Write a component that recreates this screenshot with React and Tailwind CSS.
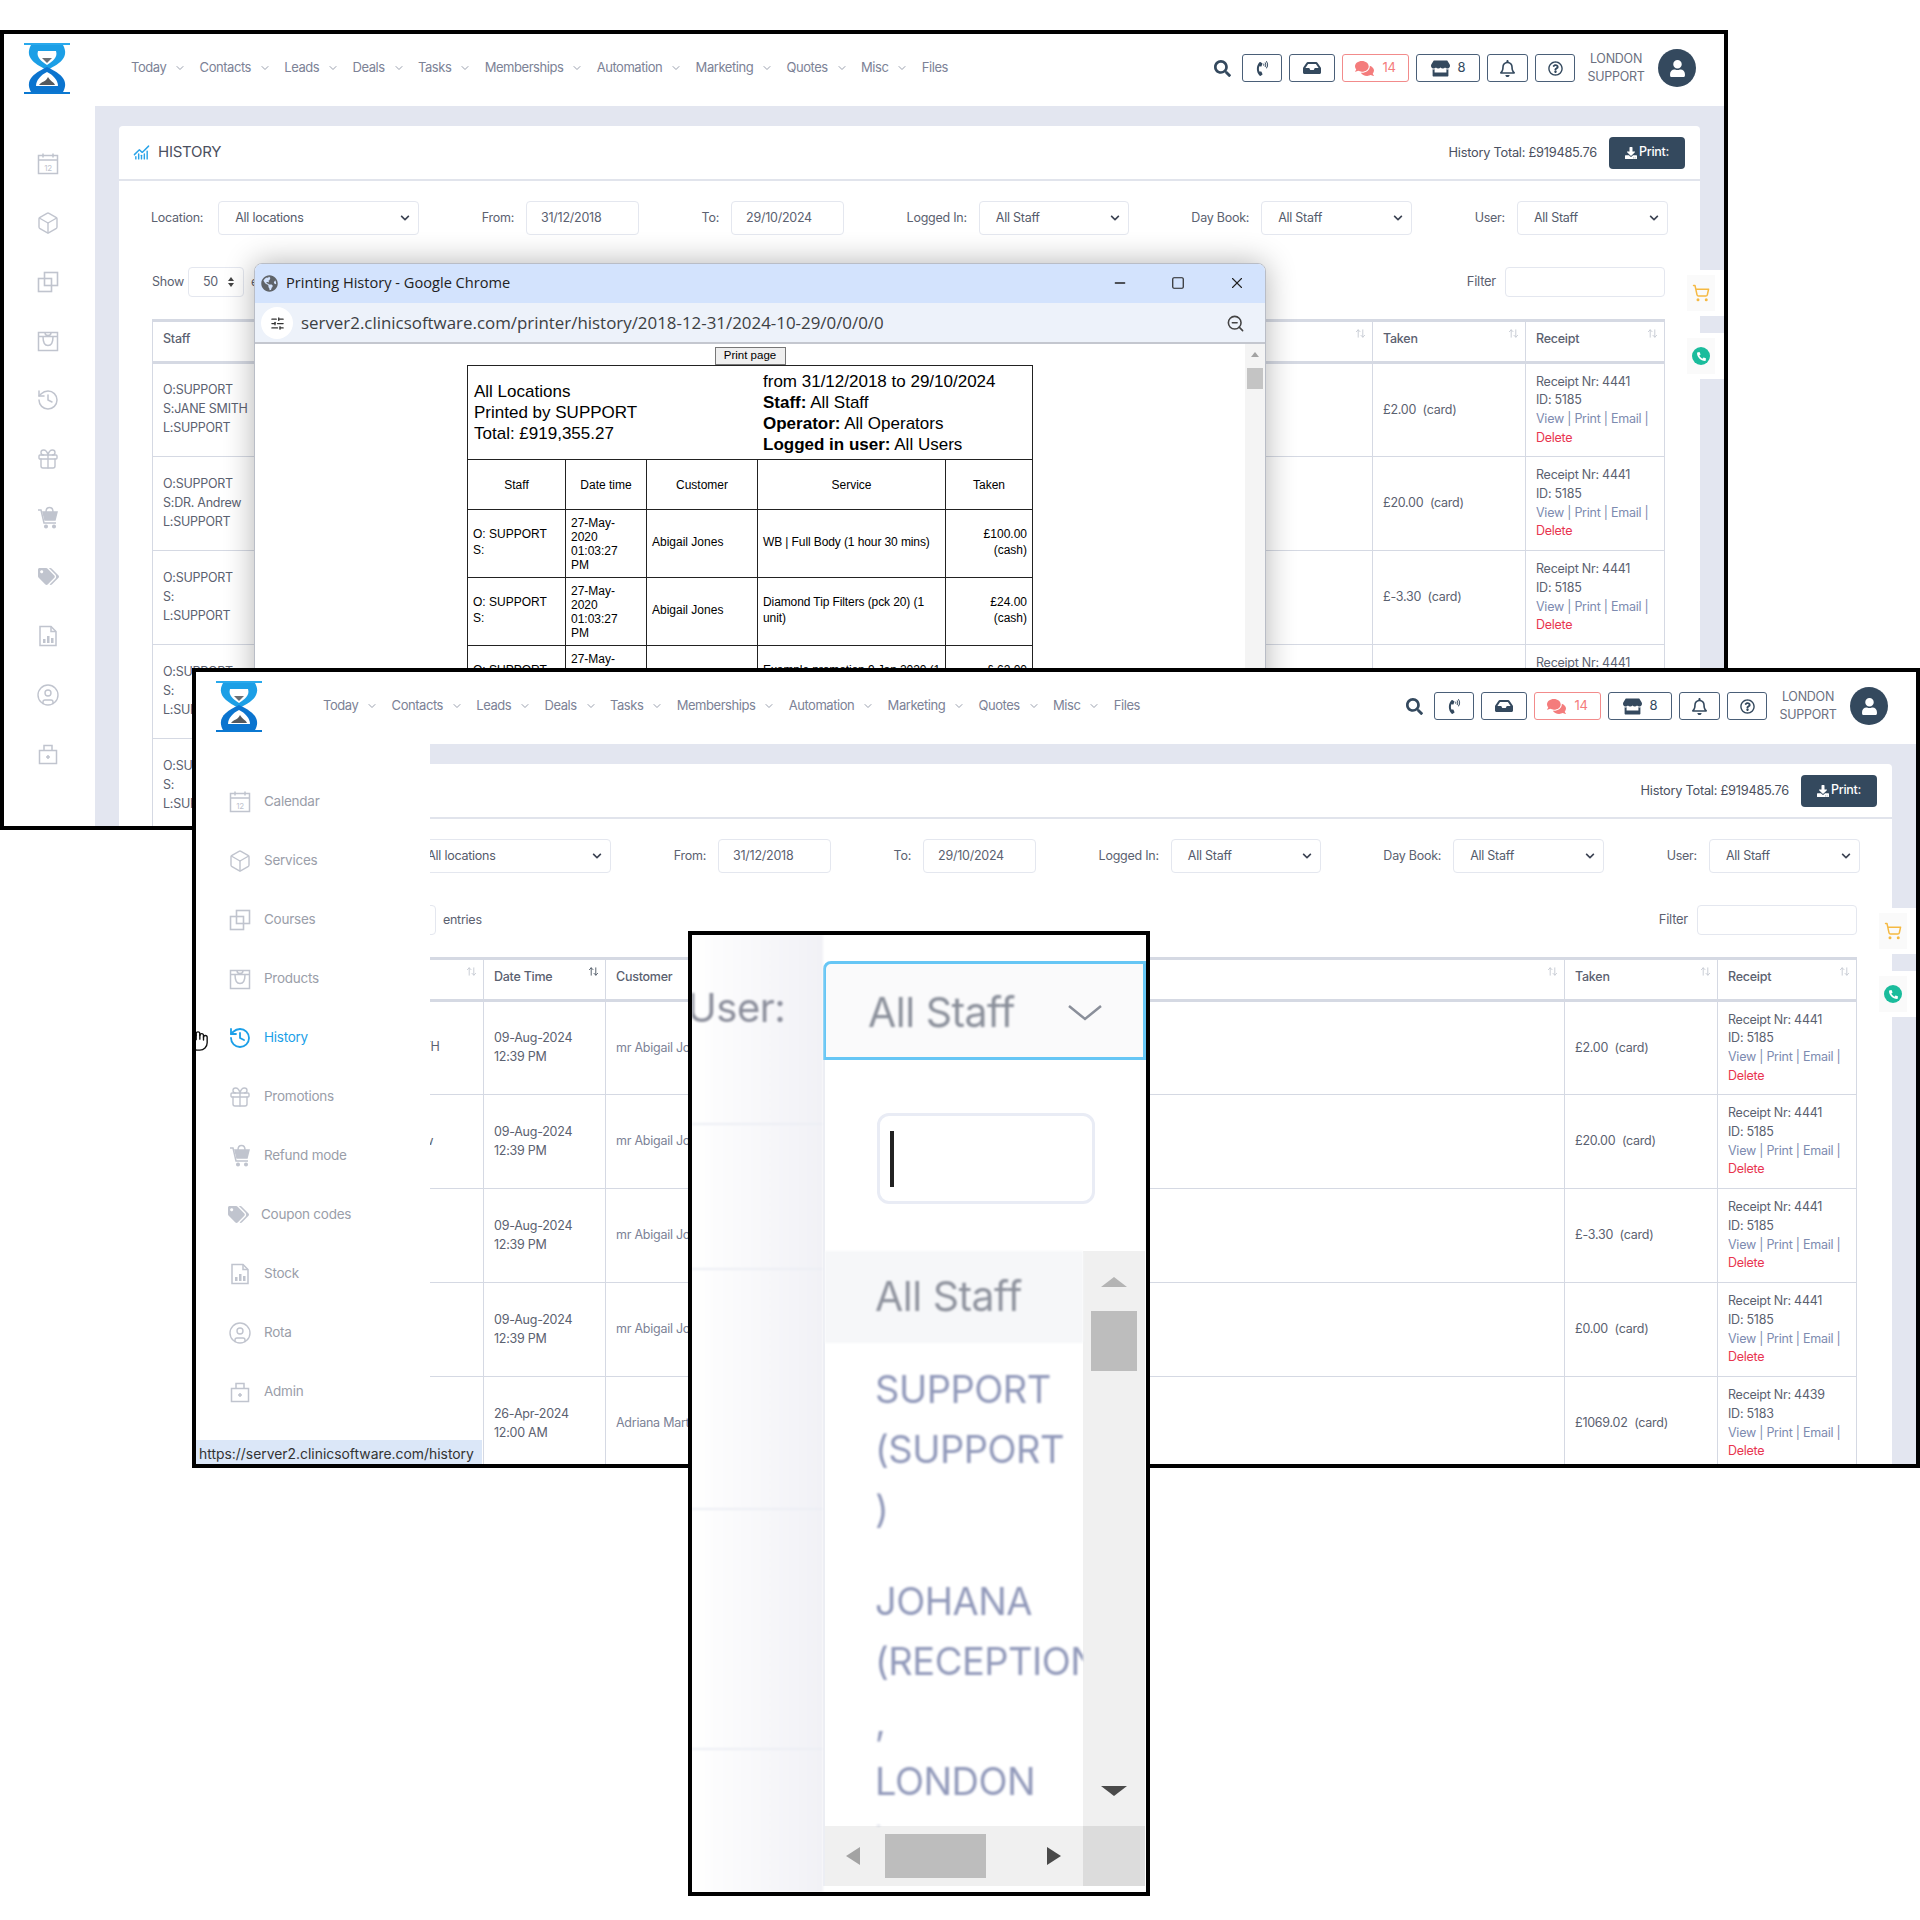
import React from "react";
import {
  Box,
  History,
  Gift,
  ChevronDown,
  ArrowUpDown,
  Minus,
  Square,
  X,
  ZoomOut,
  SlidersHorizontal,
  Hand,
  ShoppingCart,
  CircleUser,
  ChartNoAxesCombined,
} from "lucide-react";
import {
  FaSearch,
  FaPhoneVolume,
  FaInbox,
  FaComments,
  FaStore,
  FaRegBell,
  FaRegQuestionCircle,
  FaUser,
  FaDownload,
  FaChevronDown,
  FaTags,
  FaGlobeAmericas,
  FaPhone,
} from "react-icons/fa";

const nav = [
  "Today",
  "Contacts",
  "Leads",
  "Deals",
  "Tasks",
  "Memberships",
  "Automation",
  "Marketing",
  "Quotes",
  "Misc",
];

const rows = [
  { staff: "JANE SMITH", date: "09-Aug-2024", time: "12:39 PM", customer: "mr Abigail Jones", taken: "£2.00", nr: "4441", id: "5185" },
  { staff: "DR. Andrew", date: "09-Aug-2024", time: "12:39 PM", customer: "mr Abigail Jones", taken: "£20.00", nr: "4441", id: "5185" },
  { staff: "", date: "09-Aug-2024", time: "12:39 PM", customer: "mr Abigail Jones", taken: "£-3.30", nr: "4441", id: "5185" },
  { staff: "", date: "09-Aug-2024", time: "12:39 PM", customer: "mr Abigail Jones", taken: "£0.00", nr: "4441", id: "5185" },
  { staff: "", date: "26-Apr-2024", time: "12:00 AM", customer: "Adriana Martin", taken: "£1069.02", nr: "4439", id: "5183" },
];

function Logo() {
  return (
    <svg width="46" height="51" viewBox="0 0 46 51" className="shrink-0">
      <path d="M7 2 C1 13 8 20 23 27 C38 20 45 13 39 2 Z" fill="#1c9fe6" />
      <path d="M23 24 C8 31 1 38 7 49 H39 C45 38 38 31 23 24 Z" fill="#0b74cf" />
      <path d="M14 8 H32 C34 14 29 18 23 22 C17 18 12 14 14 8 Z" fill="#fff" />
      <path d="M23 29 C17 32 12 37 12 43 H34 C34 37 29 32 23 29 Z" fill="#fff" />
      <path d="M15 42 C18 38 22 39 24 34 C26 38 30 39 31 42 Z" fill="#55595e" />
      <path d="M18 15 H28 L23 20 Z" fill="#6b6f74" />
      <rect x="0" y="0" width="46" height="2" fill="#29a9ec" />
      <rect x="0" y="49" width="46" height="2" fill="#0b78d1" />
    </svg>
  );
}

function CalendarIcon() {
  return (
    <svg width="24" height="24" viewBox="0 0 24 24" fill="none" stroke="#c0c4ce" strokeWidth="1.5">
      <rect x="2.5" y="3.5" width="19" height="18" />
      <path d="M2.5 8h19M7 1.5v4M17 1.5v4" />
      <text x="12" y="18.5" textAnchor="middle" fontSize="8" stroke="none" fill="#c0c4ce" fontFamily="Inter, sans-serif">12</text>
    </svg>
  );
}

function CoursesIcon() {
  return (
    <svg width="24" height="24" viewBox="0 0 24 24" fill="none" stroke="#c0c4ce" strokeWidth="1.6">
      <rect x="2.5" y="8.5" width="13" height="13" />
      <rect x="8.5" y="2.5" width="13" height="13" />
    </svg>
  );
}

function ProductsIcon() {
  return (
    <svg width="24" height="24" viewBox="0 0 24 24" fill="none" stroke="#c0c4ce" strokeWidth="1.5">
      <rect x="2.5" y="3.5" width="19" height="18" />
      <path d="M2.5 7.5h19M7 7.5c0 6 2 9 5 9s5-3 5-9M9 3.5c0 2 1.5 3 3 3s3-1 3-3" />
    </svg>
  );
}

function RefundIcon() {
  return (
    <svg width="24" height="24" viewBox="0 0 24 24" fill="none" stroke="#c0c4ce" strokeWidth="1.5">
      <path d="M2 4h3l3 13h12" />
      <path d="M7 6h14l-2 8H9z" fill="#c0c4ce" />
      <circle cx="10" cy="20.5" r="1.3" fill="#c0c4ce" />
      <circle cx="18" cy="20.5" r="1.3" fill="#c0c4ce" />
      <path d="M10 6c0-6 7-6 7 0" />
    </svg>
  );
}

function StockIcon() {
  return (
    <svg width="24" height="24" viewBox="0 0 24 24" fill="none" stroke="#c0c4ce" strokeWidth="1.5">
      <path d="M4 2.5h11l5 5v14H4z" />
      <path d="M15 2.5v5h5" />
      <path d="M7 19v-4h2.5v4zM11 19v-7h2.5v7zM15 19v-5h2.5v5z" fill="#c0c4ce" stroke="none" />
    </svg>
  );
}

function AdminIcon() {
  return (
    <svg width="24" height="24" viewBox="0 0 24 24" fill="none" stroke="#c0c4ce" strokeWidth="1.5">
      <rect x="3.5" y="8.5" width="17" height="13" />
      <path d="M8 8.5V3.5h8v5M12 13v4M10 15h4" />
    </svg>
  );
}

const side = [
  { label: "Calendar", icon: <CalendarIcon /> },
  { label: "Services", icon: <Box size={24} strokeWidth={1.4} color="#c0c4ce" /> },
  { label: "Courses", icon: <CoursesIcon /> },
  { label: "Products", icon: <ProductsIcon /> },
  { label: "History", icon: <History size={24} strokeWidth={1.5} color="#c0c4ce" /> },
  { label: "Promotions", icon: <Gift size={24} strokeWidth={1.4} color="#c0c4ce" /> },
  { label: "Refund mode", icon: <RefundIcon /> },
  { label: "Coupon codes", icon: <FaTags size={21} color="#c0c4ce" /> },
  { label: "Stock", icon: <StockIcon /> },
  { label: "Rota", icon: <CircleUser size={24} strokeWidth={1.4} color="#c0c4ce" /> },
  { label: "Admin", icon: <AdminIcon /> },
];

function Sel({ text, width }) {
  return (
    <div className={`flex h-[34px] items-center justify-between rounded border border-[#e4e7ef] pl-4 pr-2 text-[#555b6b] ${width}`}>
      <span>{text}</span>
      <FaChevronDown size={10} color="#3b4252" />
    </div>
  );
}

function Box2({ children, width, red }) {
  return (
    <div
      className={`flex h-[28px] items-center justify-center gap-2 rounded-[3px] border-[1.5px] ${
        red ? "border-[#f28b8b] text-[#f47c7c]" : "border-[#4a5f78] text-[#34495e]"
      } ${width}`}
    >
      {children}
    </div>
  );
}

function Th({ children, dark }) {
  return (
    <th className="border-x border-[#d5d9e3] px-[10px] pt-[6px] text-left align-top font-medium">
      <div className="flex items-start justify-between">
        <span className="mt-[2px]">{children}</span>
        <ArrowUpDown size={11} color={dark ? "#4b5563" : "#c5c9d2"} className="-mr-1" />
      </div>
    </th>
  );
}

function AppWindow({ position, expanded, children }) {
  return (
    <div className={`absolute h-[800px] w-[1728px] overflow-hidden border-4 border-black bg-white font-['Inter',sans-serif] text-[12.5px] tracking-[-0.25px] text-[#5b6170] ${position}`}>
      {/* Header */}
      <div className="flex h-[72px] items-center pb-[4px] pl-[20px] pr-[28px]">
        <Logo />
        <nav className="ml-[61px] flex items-center gap-[13.3px] text-[13px] tracking-[-0.45px] text-[#7c8296]">
          {nav.map((n) => (
            <div key={n} className="flex items-center gap-[8px]">
              <span>{n}</span>
              <ChevronDown size={12} color="#9aa0ae" />
            </div>
          ))}
          <span>Files</span>
        </nav>
        <div className="ml-auto flex items-center gap-[7px]">
          <FaSearch size={17} color="#34495e" className="mr-[4px]" />
          <Box2 width="w-[40px]"><FaPhoneVolume size={15} /></Box2>
          <Box2 width="w-[46px]"><FaInbox size={18} /></Box2>
          <Box2 width="w-[67px]" red><FaComments size={19} /><span className="text-[13px]">14</span></Box2>
          <Box2 width="w-[64px]"><FaStore size={19} /><span className="text-[13px]">8</span></Box2>
          <Box2 width="w-[41px]"><FaRegBell size={17} /></Box2>
          <Box2 width="w-[40px]"><FaRegQuestionCircle size={15} /></Box2>
          <div className="ml-[3px] w-[62px] whitespace-nowrap text-center text-[12.5px] leading-[18.5px] text-[#6b7080]">
            <div>LONDON</div>
            <div>SUPPORT</div>
          </div>
          <div className="ml-[4px] flex h-[38px] w-[38px] items-center justify-center rounded-full bg-[#34495e]">
            <FaUser size={17} color="#fff" />
          </div>
        </div>
      </div>

      <div className="relative flex h-[720px]">
        {/* Collapsed sidebar */}
        <div className="flex w-[91px] shrink-0 flex-col pr-[3px] pt-[28px]">
          {side.map((s) => (
            <div key={s.label} className="flex h-[59px] items-center justify-center">{s.icon}</div>
          ))}
        </div>

        {/* Main */}
        <div className="min-w-0 flex-1 bg-[#e3e6f0] py-[20px] pl-[24px] pr-[24px]">
          <div className="h-[800px] rounded-sm bg-white">
            <div className="flex h-[55px] items-center justify-between border-b-2 border-[#e1e4ec] pl-[14px] pr-[15px]">
              <div className="flex items-center gap-[8px] text-[15px] text-[#4b5060]">
                <ChartNoAxesCombined size={17} color="#29a3e8" />
                <span>HISTORY</span>
              </div>
              <div className="flex items-center gap-[12px]">
                <span className="text-[12.8px] text-[#4b5060]">History Total: £919485.76</span>
                <div className="flex h-[32px] w-[76px] items-center justify-center gap-[2px] rounded-sm bg-[#34495e] font-medium text-white">
                  <FaDownload size={12} />
                  <span>Print:</span>
                </div>
              </div>
            </div>

            {/* Filters */}
            <div className="flex items-center justify-between px-[32px] pt-[20px]">
              <div className="flex items-center gap-[15px]"><span>Location:</span><Sel text="All locations" width="w-[201px]" /></div>
              <div className="flex items-center gap-[12px]"><span>From:</span><div className="flex h-[34px] w-[113px] items-center rounded border border-[#e4e7ef] pl-[14px]">31/12/2018</div></div>
              <div className="flex items-center gap-[12px]"><span>To:</span><div className="flex h-[34px] w-[113px] items-center rounded border border-[#e4e7ef] pl-[14px]">29/10/2024</div></div>
              <div className="flex items-center gap-[12px]"><span>Logged In:</span><Sel text="All Staff" width="w-[150px]" /></div>
              <div className="flex items-center gap-[12px]"><span>Day Book:</span><Sel text="All Staff" width="w-[151px]" /></div>
              <div className="flex items-center gap-[12px]"><span>User:</span><Sel text="All Staff" width="w-[151px]" /></div>
            </div>

            <div className="flex items-center justify-between pl-[33px] pr-[35px] pt-[32px]">
              <div className="flex items-center gap-[4px]">
                <span>Show</span>
                <div className="flex h-[30px] w-[56px] items-center justify-between rounded border border-[#e4e7ef] pl-[14px] pr-[9px]">
                  <span>50</span>
                  <div className="flex flex-col gap-[2px]">
                    <div className="h-0 w-0 border-x-[3px] border-b-[4px] border-x-transparent border-b-[#444]" />
                    <div className="h-0 w-0 border-x-[3px] border-t-[4px] border-x-transparent border-t-[#444]" />
                  </div>
                </div>
                <span className="ml-[3px]">entries</span>
              </div>
              <div className="flex items-center gap-[9px]">
                <span className="text-[13px]">Filter</span>
                <div className="h-[30px] w-[160px] rounded-sm border border-[#e4e7ef]" />
              </div>
            </div>

            {/* Table */}
            <div className="pl-[33px] pr-[35px] pt-[22px]">
              <table className="w-full table-fixed border-collapse">
                <colgroup>
                  <col className="w-[139px]" />
                  <col className="w-[122px]" />
                  <col className="w-[270px]" />
                  <col />
                  <col className="w-[153px]" />
                  <col className="w-[139px]" />
                </colgroup>
                <thead>
                  <tr className="h-[42px] border-y-[3px] border-[#d5d9e3]">
                    <Th>Staff</Th>
                    <Th dark>Date Time</Th>
                    <Th>Customer</Th>
                    <Th></Th>
                    <Th>Taken</Th>
                    <Th>Receipt</Th>
                  </tr>
                </thead>
                <tbody>
                  {rows.map((r, i) => (
                    <tr key={i} className="h-[94px] border-b border-[#d5d9e3]">
                      <td className="border-x border-[#d5d9e3] px-[10px] pb-[3px] leading-[19px]">
                        <div>O:SUPPORT</div>
                        <div className="whitespace-nowrap">S:{r.staff}</div>
                        <div>L:SUPPORT</div>
                      </td>
                      <td className="border-x border-[#d5d9e3] px-[10px] pb-[2px] leading-[19px]">
                        <div>{r.date}</div>
                        <div>{r.time}</div>
                      </td>
                      <td className="border-x border-[#d5d9e3] px-[10px] text-[#7c8296]">{r.customer}</td>
                      <td className="border-x border-[#d5d9e3]"></td>
                      <td className="border-x border-[#d5d9e3] px-[10px]">{r.taken}&nbsp; (card)</td>
                      <td className="border-x border-[#d5d9e3] px-[10px] leading-[18.7px]">
                        <div>Receipt Nr: {r.nr}</div>
                        <div>ID: {r.id}</div>
                        <div className="whitespace-nowrap text-[#7d8bb0]">View | Print | Email |</div>
                        <div className="text-[#e8354f]">Delete</div>
                      </td>
                    </tr>
                  ))}
                </tbody>
              </table>
            </div>
          </div>
        </div>

        {/* Floating side widgets */}
        <div className="absolute right-0 top-[164px] flex flex-col gap-[17px]">
          <div className="flex h-[46px] w-[43px] items-center justify-center rounded-l bg-white pr-[3px]">
            <div className="flex h-[36px] w-[28px] items-center justify-center bg-[#fafafa]">
              <ShoppingCart size={18} color="#f5b942" />
            </div>
          </div>
          <div className="flex h-[46px] w-[43px] items-center justify-center rounded-l bg-white pr-[3px]">
            <div className="flex h-[36px] w-[28px] items-center justify-center bg-[#fafafa]">
              <span className="flex h-[18px] w-[18px] items-center justify-center rounded-full bg-[#1abc9c]">
                <FaPhone size={9} color="#fff" className="rotate-90" />
              </span>
            </div>
          </div>
        </div>

        {expanded && (
          <>
            <div className="absolute bottom-0 left-0 top-0 w-[234px] bg-white pt-[28px]">
              {side.map((s) => (
                <div key={s.label} className="flex h-[59px] items-center pl-[32px]">
                  {s.label === "History" ? <History size={24} strokeWidth={1.8} color="#1b9fe8" /> : s.icon}
                  <span className={`ml-[12px] text-[13.5px] ${s.label === "History" ? "text-[#1b9fe8]" : "text-[#9a9ea9]"}`}>{s.label}</span>
                </div>
              ))}
            </div>
            <Hand size={22} strokeWidth={1.5} color="#111" className="absolute -left-[9px] top-[286px]" />
            <div className="absolute bottom-0 left-0 flex h-[24px] w-[286px] items-center bg-[#dbe7f8] pl-[3px] pt-[5px] text-[13.9px] tracking-normal text-[#333]">
              https://server2.clinicsoftware.com/history
            </div>
          </>
        )}
      </div>
      {children}
    </div>
  );
}

function PrintPopup() {
  const cell = "border border-[#222] px-[5px] pb-[3px]";
  return (
    <div className="absolute left-[250px] top-[229px] h-[700px] w-[1012px] overflow-hidden rounded-t-lg border border-[#b9bdc6] bg-white font-['Open_Sans',sans-serif] tracking-normal shadow-[0_0_30px_rgba(0,0,0,0.3)]">
      <div className="flex h-[39px] items-center bg-[#d3e3fd] pb-[1px] pl-[6px] pr-[19px] text-[14.6px] text-[#222]">
        <FaGlobeAmericas size={17} color="#5f6368" />
        <span className="ml-[8px]">Printing History - Google Chrome</span>
        <div className="ml-auto flex items-center gap-[43px]">
          <Minus size={16} />
          <Square size={14} />
          <X size={18} strokeWidth={1.5} />
        </div>
      </div>
      <div className="flex h-[41px] items-center border-b-2 border-[#c4c7cf] bg-[#edf2fa] pl-[6px] pr-[20px] pt-[1px] text-[16.9px] text-[#3c4043]">
        <div className="flex h-[32px] w-[32px] items-center justify-center rounded-full bg-white">
          <SlidersHorizontal size={15} color="#333" />
        </div>
        <span className="ml-[8px] whitespace-nowrap">server2.clinicsoftware.com/printer/history/2018-12-31/2024-10-29/0/0/0/0</span>
        <ZoomOut size={19} color="#444" className="ml-auto" />
      </div>
      <div className="flex h-[620px]">
        <div className="flex min-w-0 flex-1 flex-col items-center pt-[3px] font-['Liberation_Sans',Arial,sans-serif] text-[12px] text-black">
          <div className="flex h-[18px] w-[71px] items-center justify-center border border-[#777] bg-[#efefef] text-[11.5px]">Print page</div>
          <table className="w-[565px] table-fixed border-collapse">
            <colgroup>
              <col className="w-[98px]" />
              <col className="w-[81px]" />
              <col className="w-[111px]" />
              <col className="w-[188px]" />
              <col className="w-[87px]" />
            </colgroup>
            <tbody>
              <tr className="h-[94px]">
                <td colSpan={5} className="border border-[#222]">
                  <div className="flex items-center text-[17px] leading-[21px]">
                    <div className="w-[295px] pl-[6px]">
                      <div>All Locations</div>
                      <div>Printed by SUPPORT</div>
                      <div>Total: £919,355.27</div>
                    </div>
                    <div className="whitespace-nowrap">
                      <div>from 31/12/2018 to 29/10/2024</div>
                      <div><b>Staff:</b> All Staff</div>
                      <div><b>Operator:</b> All Operators</div>
                      <div><b>Logged in user:</b> All Users</div>
                    </div>
                  </div>
                </td>
              </tr>
              <tr className="h-[50px] text-center">
                <td className="border border-[#222] px-[5px]">Staff</td>
                <td className="border border-[#222] px-[5px]">Date time</td>
                <td className="border border-[#222] px-[5px]">Customer</td>
                <td className="border border-[#222] px-[5px]">Service</td>
                <td className="border border-[#222] px-[5px]">Taken</td>
              </tr>
              {[
                ["Abigail Jones", "WB | Full Body (1 hour 30 mins)", "£100.00"],
                ["Abigail Jones", "Diamond Tip Filters (pck 20) (1 unit)", "£24.00"],
                ["", "Example promotion 9 Jan 2020 (1 unit)", "£ 62.00"],
              ].map((r, i) => (
                <tr key={i} className="h-[68px] leading-[16px]">
                  <td className={cell}>O: SUPPORT<br />S:</td>
                  <td className="border border-[#222] px-[5px] leading-[14px]">27-May-<br />2020<br />01:03:27<br />PM</td>
                  <td className={cell}>{r[0]}</td>
                  <td className={`${cell} tracking-[-0.1px]`}>{r[1]}</td>
                  <td className={`${cell} text-right`}>{r[2]}<br />(cash)</td>
                </tr>
              ))}
            </tbody>
          </table>
        </div>
        <div className="flex w-[20px] flex-col items-center bg-[#f4f4f4] pt-[8px]">
          <div className="h-0 w-0 border-x-[4px] border-b-[5px] border-x-transparent border-b-[#a3a3a3]" />
          <div className="mt-[11px] h-[21px] w-[16px] bg-[#c4c4c4]" />
        </div>
      </div>
    </div>
  );
}

function ZoomPanel() {
  const line = "leading-[60px]";
  return (
    <div className="absolute left-[688px] top-[931px] flex h-[965px] w-[462px] overflow-hidden border-4 border-black bg-white font-['Inter',sans-serif] tracking-[-0.5px]">
      <div className="w-[131px] shrink-0 bg-gradient-to-r from-white to-[#f1f1f6] blur-[1px]">
        <div className="h-[190px] overflow-hidden border-b-2 border-[#eceef4] pt-[48px] text-[40px] leading-[50px] text-[#8b8e9b]">
          <span className="-ml-[5px] block">User:</span>
        </div>
        <div className="h-[145px] border-b-2 border-[#eceef4]" />
        <div className="h-[240px] border-b-2 border-[#eceef4]" />
        <div className="h-[240px] border-b-2 border-[#eceef4]" />
      </div>
      <div className="flex min-w-0 flex-1 flex-col pt-[26px]">
        <div className="flex h-[99px] shrink-0 items-center justify-between rounded-tl-lg border-[3px] border-[#66c6f5] bg-[#fafafb] pl-[42px] pr-[40px] pt-[4px]">
          <span className="text-[41px] text-[#8a8f9a] blur-[1px]">All Staff</span>
          <svg width="36" height="18" viewBox="0 0 36 18" fill="none" stroke="#8a8f9a" strokeWidth="2.5">
            <path d="M2 2 L18 15 L34 2" />
          </svg>
        </div>
        <div className="flex h-[191px] shrink-0 items-center justify-center border-l-2 border-[#eceef4] pt-[6px]">
          <div className="flex h-[91px] w-[218px] items-center rounded-xl border-[3px] border-[#e9ecf5] pl-[10px]">
            <div className="h-[56px] w-[4px] bg-[#222]" />
          </div>
        </div>
        <div className="flex h-[635px] shrink-0">
          <div className="flex w-[260px] shrink-0 flex-col border-l-2 border-[#eceef4]">
            <div className="h-[575px] overflow-hidden whitespace-nowrap text-[38px] text-[#9199ba] blur-[1px]">
              <div className="flex h-[92px] items-center bg-[#f6f7f9] pl-[50px] text-[41px] text-[#8f939e]">All Staff</div>
              <div className="pl-[50px] pt-[16px]">
                <div className={line}>SUPPORT</div>
                <div className={line}>(SUPPORT</div>
                <div className={line}>)</div>
                <div className={`${line} mt-[32px]`}>JOHANA</div>
                <div className={line}>(RECEPTION</div>
                <div className={line}>,</div>
                <div className={line}>LONDON</div>
                <div className={line}>)</div>
              </div>
            </div>
            <div className="flex h-[60px] items-center bg-[#f0f0f0] pl-[21px]">
              <div className="h-0 w-0 border-y-[9px] border-r-[14px] border-y-transparent border-r-[#a3a3a3]" />
              <div className="ml-[25px] h-[44px] w-[101px] bg-[#bdbdbd]" />
              <div className="ml-[61px] h-0 w-0 border-y-[9px] border-l-[14px] border-y-transparent border-l-[#4a4a4a]" />
            </div>
          </div>
          <div className="flex w-[62px] flex-col bg-[#f0f0f0]">
            <div className="flex h-[575px] flex-col items-center pb-[30px] pt-[26px]">
              <div className="h-0 w-0 border-x-[13px] border-b-[10px] border-x-transparent border-b-[#b4b4b4]" />
              <div className="mt-[24px] h-[60px] w-[46px] bg-[#bdbdbd]" />
              <div className="mt-auto h-0 w-0 border-x-[13px] border-t-[10px] border-x-transparent border-t-[#4a4a4a]" />
            </div>
            <div className="h-[60px] bg-[#dcdcdc]" />
          </div>
        </div>
      </div>
    </div>
  );
}

export default function App() {
  return (
    <div className="relative h-[1920px] w-[1920px] overflow-hidden bg-white">
      <AppWindow position="left-0 top-[30px]">
        <PrintPopup />
      </AppWindow>
      <AppWindow position="left-[192px] top-[668px]" expanded />
      <ZoomPanel />
    </div>
  );
}
